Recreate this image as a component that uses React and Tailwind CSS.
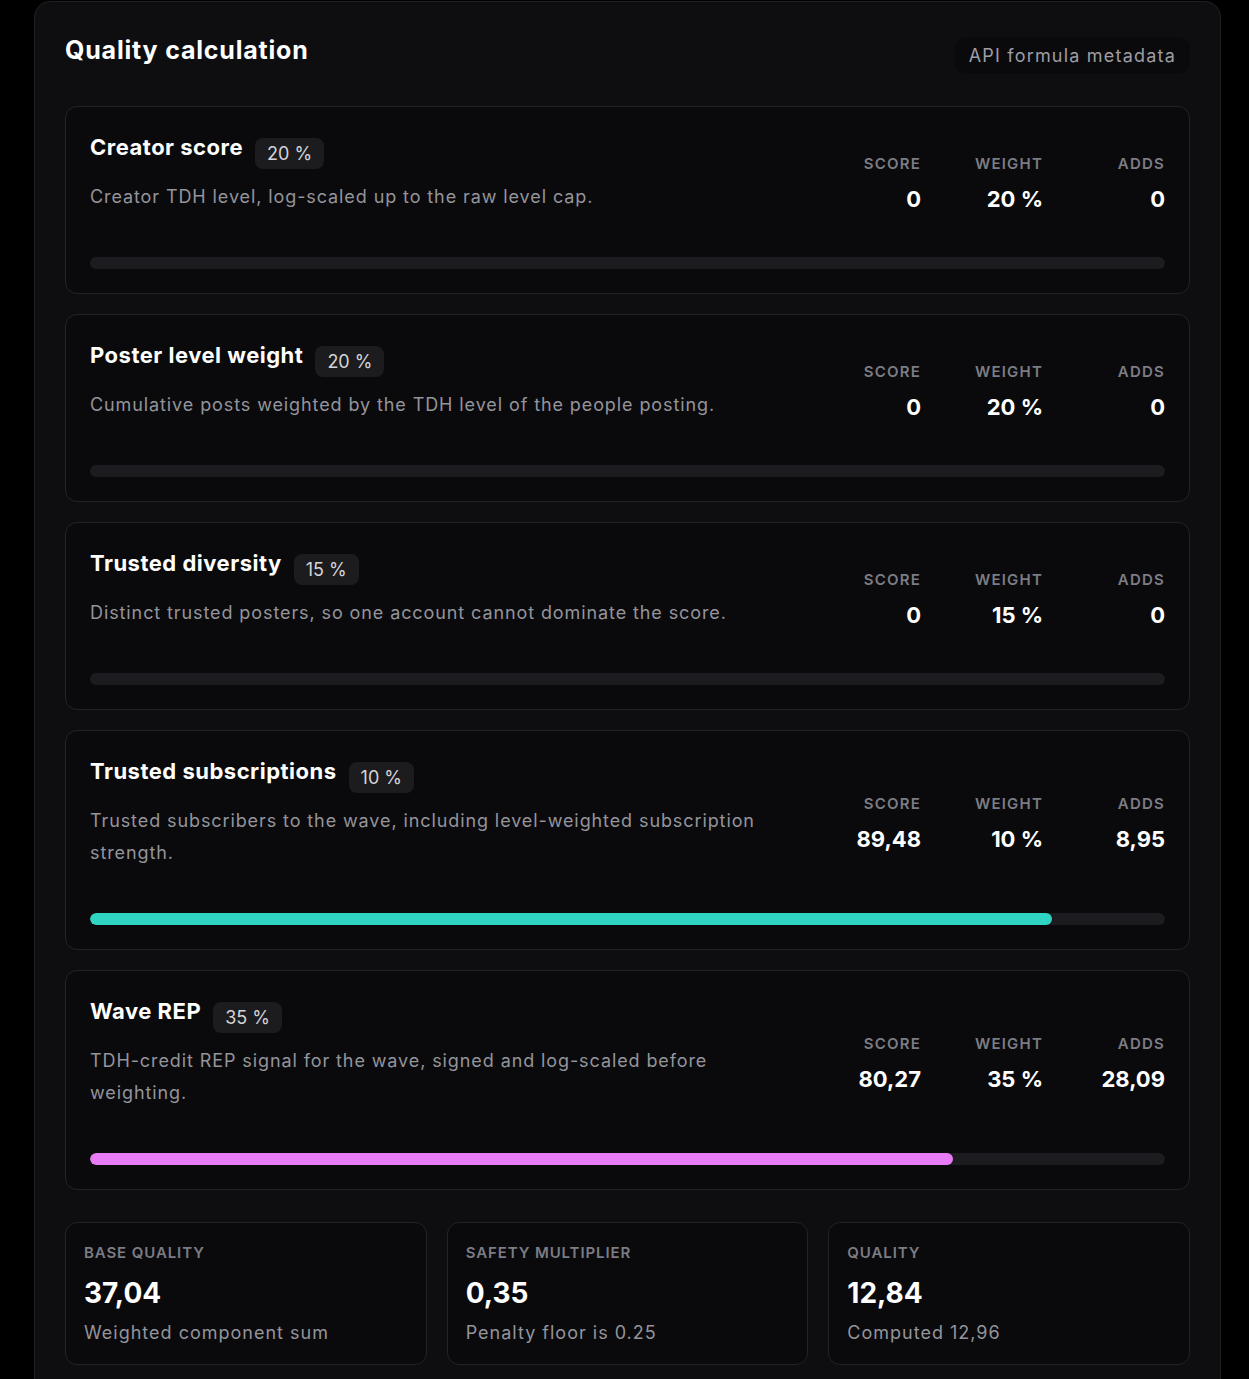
import React from 'react'

const components = [
  {
    title: 'Creator score',
    weight: '20 %',
    description: 'Creator TDH level, log-scaled up to the raw level cap.',
    score: '0',
    adds: '0',
    pct: 0,
    bar: 'bg-[#2fd5c2]',
  },
  {
    title: 'Poster level weight',
    weight: '20 %',
    description: 'Cumulative posts weighted by the TDH level of the people posting.',
    score: '0',
    adds: '0',
    pct: 0,
    bar: 'bg-[#2fd5c2]',
  },
  {
    title: 'Trusted diversity',
    weight: '15 %',
    description: 'Distinct trusted posters, so one account cannot dominate the score.',
    score: '0',
    adds: '0',
    pct: 0,
    bar: 'bg-[#2fd5c2]',
  },
  {
    title: 'Trusted subscriptions',
    weight: '10 %',
    description: 'Trusted subscribers to the wave, including level-weighted subscription strength.',
    score: '89,48',
    adds: '8,95',
    pct: 89.48,
    bar: 'bg-[#2fd5c2]',
  },
  {
    title: 'Wave REP',
    weight: '35 %',
    description: 'TDH-credit REP signal for the wave, signed and log-scaled before weighting.',
    score: '80,27',
    adds: '28,09',
    pct: 80.27,
    bar: 'bg-[#e87cf7]',
  },
]

const totals = [
  { label: 'Base quality', value: '37,04', note: 'Weighted component sum' },
  { label: 'Safety multiplier', value: '0,35', note: 'Penalty floor is 0.25' },
  { label: 'Quality', value: '12,84', note: 'Computed 12,96' },
]

function Stat({ label, value }) {
  return (
    <div className="text-right">
      <p className="text-[15px] leading-6 font-semibold uppercase tracking-[1.2px] text-[#7c7c84]">{label}</p>
      <p className="mt-[9px] text-[22px] leading-7 font-bold text-white">{value}</p>
    </div>
  )
}

function ComponentCard({ item }) {
  return (
    <div className="rounded-xl border border-[#232327] bg-[#0a0a0c] p-6">
      <div className="flex items-center gap-8">
        <div className="flex-1 min-w-0">
          <div className="flex items-start gap-3">
            <h3 className="text-[22px] leading-8 font-bold tracking-[0.5px] text-white">{item.title}</h3>
            <span className="mt-[7px] rounded-lg bg-[#1c1c1f] px-3 text-[18px] leading-[31px] text-[#d4d4d8]">
              {item.weight}
            </span>
          </div>
          <p className="mt-3 text-[18px] leading-8 tracking-[0.9px] text-[#94949b]">{item.description}</p>
        </div>
        <div className="grid w-[342px] grid-cols-3 gap-6 pt-[21px]">
          <Stat label="Score" value={item.score} />
          <Stat label="Weight" value={item.weight} />
          <Stat label="Adds" value={item.adds} />
        </div>
      </div>

      {/* progress track */}
      <div className="mt-11 h-3 rounded-full bg-[#1c1c20] overflow-hidden">
        <div className={`h-full rounded-full ${item.bar}`} style={{ width: `${item.pct}%` }} />
      </div>
    </div>
  )
}

export default function App() {
  return (
    <div className="min-h-screen bg-black px-[34px] pt-px font-['Inter',sans-serif]">
      <div className="w-[1187px] rounded-2xl border border-[#202024] bg-[#0e0e10] px-[30px] pt-[30px] pb-[30px]">
        <div className="flex items-start justify-between">
          <h2 className="mt-[2px] text-[25px] leading-8 font-bold tracking-[0.8px] text-white">Quality calculation</h2>
          <span className="mt-[5px] rounded-xl bg-[#0a0a0c] px-[14px] text-[18px] leading-[37px] tracking-[1.2px] text-[#9d9da4]">
            API formula metadata
          </span>
        </div>

        <div className="mt-8 flex flex-col gap-5">
          {components.map((item) => (
            <ComponentCard key={item.title} item={item} />
          ))}
        </div>

        <div className="mt-8 grid grid-cols-3 gap-5">
          {totals.map((t) => (
            <div key={t.label} className="rounded-xl border border-[#232327] bg-[#0a0a0c] px-[18px] pt-5 pb-[17px]">
              <p className="text-[15px] leading-5 font-semibold uppercase tracking-[0.9px] text-[#7c7c84]">{t.label}</p>
              <p className="mt-3 text-[28px] leading-9 font-bold text-white">{t.value}</p>
              <p className="mt-2 text-[18px] leading-7 tracking-[1px] text-[#94949b]">{t.note}</p>
            </div>
          ))}
        </div>
      </div>
    </div>
  )
}
